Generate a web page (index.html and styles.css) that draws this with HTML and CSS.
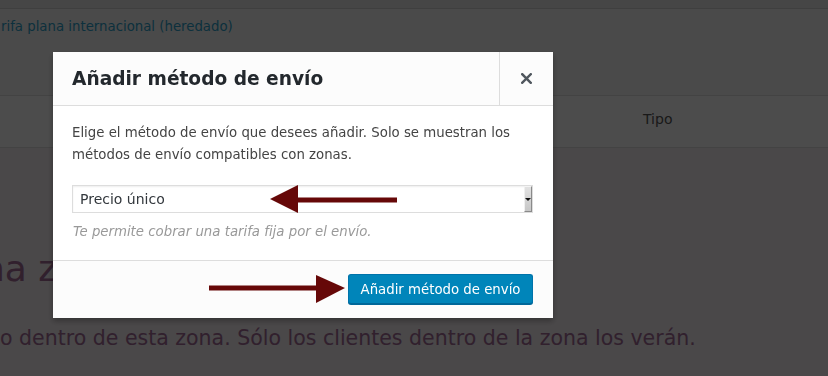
FILE: index.html
```html
<!DOCTYPE html>
<html lang="es">
<head>
  <meta charset="UTF-8">
  <title>Zonas de envío - Añadir método</title>
  <link rel="stylesheet" href="styles.css">
</head>
<body>

<div class="topbar"></div>

<div class="inherited">
  <a href="#" class="inherited-link">rifa plana internacional (heredado)</a>
</div>

<div class="table-head">
  <span></span>
  <span class="col-type">Tipo</span>
</div>

<section class="zone">
  <h2 class="zone-title">na zona de envío</h2>
  <p class="zone-desc">o dentro de esta zona. Sólo los clientes dentro de la zona los verán.</p>
</section>

<div class="backdrop"></div>

<div class="modal">
  <header class="modal-header">
    <h1 class="modal-title">Añadir método de envío</h1>
    <button class="modal-close" aria-label="Cerrar">
      <svg width="11" height="11" viewBox="0 0 11 11">
        <path d="M1.2 1.2 L9.8 9.8 M9.8 1.2 L1.2 9.8" stroke="#50575e" stroke-width="2.4" stroke-linecap="square"/>
      </svg>
    </button>
  </header>

  <div class="modal-body">
    <p class="modal-intro">Elige el método de envío que desees añadir. Solo se muestran los métodos de envío compatibles con zonas.</p>
    <div class="select">
      <span class="select-value">Precio único</span>
      <span class="select-btn"><span class="select-caret"></span></span>
    </div>
    <p class="select-help">Te permite cobrar una tarifa fija por el envío.</p>
  </div>

  <footer class="modal-footer">
    <button class="btn-primary">Añadir método de envío</button>
  </footer>

  <!-- annotation arrows drawn over the screenshot -->
  <svg class="arrow arrow-select" width="128" height="28" viewBox="0 0 128 28">
    <polygon points="0,14 28,0 28,28" fill="#660808"/>
    <rect x="27" y="12.5" width="100" height="5" fill="#660808"/>
  </svg>
  <svg class="arrow arrow-button" width="137" height="28" viewBox="0 0 137 28">
    <rect x="0" y="10.5" width="109" height="5" fill="#660808"/>
    <polygon points="107,0 136,13 107,28" fill="#660808"/>
  </svg>
</div>

</body>
</html>
```

FILE: styles.css
```css
* {
  margin: 0;
  padding: 0;
  box-sizing: border-box;
}

body {
  font-family: "DejaVu Sans", "Liberation Sans", sans-serif;
  background-color: #f7f7f7;
  height: 100vh;
  overflow: hidden;
  display: flex;
  flex-direction: column;
}

.topbar {
  height: 9px;
  background-color: #ececec;
  border-bottom: 1px solid #d4d4d4;
}

.inherited {
  height: 86px;
  padding-top: 8px;
  font-size: 13.3px;
  line-height: 20px;
}

.inherited-link {
  color: #2ea2cc;
  text-decoration: none;
  padding-left: 1px;
}

.table-head {
  display: grid;
  grid-template-columns: 643px 1fr;
  background-color: #fff;
  border-top: 1px solid #e0e0e0;
  border-bottom: 1px solid #e0e0e0;
  height: 53px;
  padding-top: 13px;
  font-size: 14px;
  line-height: 20px;
}

.col-type {
  color: #555;
}

.zone {
  flex: 1;
  background-color: #f7f0f4;
  color: #a36c98;
  white-space: nowrap;
}

.zone-title {
  font-size: 36px;
  font-weight: normal;
  line-height: 44px;
  margin: 99px 0 0 -18px;
}

.zone-desc {
  font-size: 20.5px;
  line-height: 28px;
  margin-top: 33px;
}

.backdrop {
  position: fixed;
  top: 0;
  left: 0;
  right: 0;
  bottom: 0;
  background-color: rgba(0, 0, 0, 0.7);
}

.modal {
  position: fixed;
  top: 52px;
  left: 53px;
  width: 500px;
  background-color: #fff;
  box-shadow: 0 3px 6px rgba(0, 0, 0, 0.3);
}

.modal-header {
  display: flex;
  height: 54px;
  background-color: #fcfcfc;
  border-bottom: 1px solid #ddd;
}

.modal-title {
  flex: 1;
  padding-left: 19px;
  font-size: 18.6px;
  line-height: 53px;
  color: #23282d;
}

.modal-close {
  width: 54px;
  border: none;
  border-left: 1px solid #ddd;
  background: transparent;
  display: flex;
  align-items: center;
  justify-content: center;
  cursor: pointer;
}

.modal-body {
  padding: 16px 20px 18px 19px;
  font-size: 13.3px;
}

.modal-intro {
  color: #444;
  line-height: 22px;
  margin-bottom: 19px;
}

.select {
  display: flex;
  height: 28px;
  border: 1px solid #ddd;
  box-shadow: inset 0 1px 2px rgba(0, 0, 0, 0.07);
  background-color: #fff;
}

.select-value {
  flex: 1;
  padding-left: 7px;
  font-size: 14px;
  line-height: 26px;
  color: #32373c;
}

.select-btn {
  width: 8px;
  display: flex;
  align-items: center;
  justify-content: center;
  background: linear-gradient(#e2e2e2, #c6c6c6);
  border-top: 1px solid #f4f4f4;
  border-left: 1px solid #f0f0f0;
  border-right: 1px solid #8a8a8a;
  border-bottom: 1px solid #8a8a8a;
}

.select-caret {
  width: 0;
  height: 0;
  border-left: 3px solid transparent;
  border-right: 3px solid transparent;
  border-top: 3px solid #111;
}

.select-help {
  margin-top: 9px;
  font-style: italic;
  line-height: 20px;
  color: #999;
  padding-left: 1px;
}

.modal-footer {
  display: flex;
  justify-content: flex-end;
  padding: 13px 20px 14px;
  background-color: #fcfcfc;
  border-top: 1px solid #ddd;
}

.btn-primary {
  height: 30px;
  padding: 0 11.5px;
  font-family: inherit;
  font-size: 13.3px;
  color: #fff;
  background-color: #0085ba;
  border: 1px solid #0073aa;
  border-bottom-color: #006799;
  border-radius: 3px;
  box-shadow: 0 1px 0 #006799;
  cursor: pointer;
}

.arrow {
  position: absolute;
}

.arrow-select {
  left: 217px;
  top: 133px;
}

.arrow-button {
  left: 156px;
  top: 223px;
}
```
